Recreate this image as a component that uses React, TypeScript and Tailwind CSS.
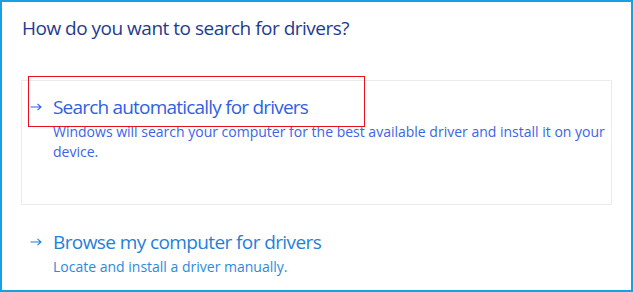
const font = { fontFamily: '"Segoe UI", "Open Sans", "Noto Sans", sans-serif' };

function Arrow({ color }: { color: string }) {
  return (
    <svg width="12" height="8" viewBox="0 0 12 8" fill="none" className="shrink-0">
      <path d="M0.5 4H11M7.5 0.8L11 4L7.5 7.2" stroke={color} strokeWidth="1.1" />
    </svg>
  );
}

export default function App() {
  return (
    <div
      className="w-[633px] h-[292px] border-2 border-[#18a0e4] bg-white overflow-hidden"
      style={font}
    >
      {/* 제목 */}
      <h1 className="pt-[12px] pl-[20px] text-[19px] leading-[28px] text-[#1f3b8f] font-normal tracking-[-0.5px]">
        How do you want to search for drivers?
      </h1>

      {/* 자동 검색 카드 */}
      <div className="relative mt-[38px] mx-[19px] h-[125px] border border-[#ebebeb] pt-[12px] pl-[8px]">
        <div className="absolute left-[6px] -top-[5px] w-[337px] h-[51px] border border-[#e3121c]" />
        <div className="flex items-center h-[28px]">
          <Arrow color="#2f5fe4" />
          <span className="ml-[11px] text-[19px] leading-[28px] text-[#2f5fe4] tracking-[-0.8px]">
            Search automatically for drivers
          </span>
        </div>
        <p className="mt-[1px] ml-[23px] text-[14px] leading-[20px] text-[#3b64e6]">
          Windows will search your computer for the best available driver and install it on your
          <br />
          device.
        </p>
      </div>

      {/* 수동 검색 */}
      <div className="mt-[23px] ml-[28px]">
        <div className="flex items-center h-[28px]">
          <Arrow color="#1f80d8" />
          <span className="ml-[11px] text-[19px] leading-[28px] text-[#1f80d8] tracking-[-0.6px]">
            Browse my computer for drivers
          </span>
        </div>
        <p className="mt-[1px] ml-[23px] text-[14px] leading-[20px] text-[#2c8ade]">
          Locate and install a driver manually.
        </p>
      </div>
    </div>
  );
}
